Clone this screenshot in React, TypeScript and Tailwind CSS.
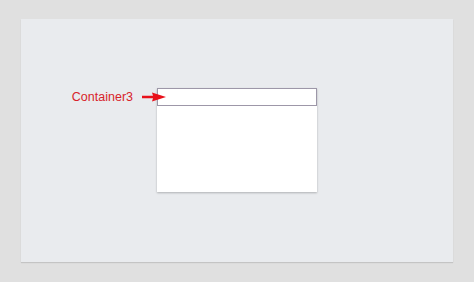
export default function App() {
  return (
    <div className="w-[474px] h-[282px] bg-[#e0e0e0] pt-[19px] pl-[21px]" style={{ fontFamily: '"Liberation Sans", Arial, sans-serif' }}>
      <div className="w-[432px] h-[243px] bg-[#e9ebee] shadow-[0_1px_1px_rgba(0,0,0,0.12)] pt-[69px] pl-[136px]">
        <div className="relative w-[160px] h-[104px] bg-white shadow-[0_1px_2px_rgba(0,0,0,0.25)]">
          <div className="h-[18px] border border-[#9d97a8]" />
          <div className="absolute right-full top-0 h-[18px] mr-[-10px] flex items-center gap-[8px]">
            <span className="text-[12.5px] text-[#d8232a] leading-none whitespace-nowrap">Container3</span>
            <svg width="26" height="10" viewBox="0 0 26 10">
              <path d="M1 3.8 L12 3.8 L11 0.5 L25 5 L11 9.5 L12 6.2 L1 6.2 Z" fill="#e8101a" />
            </svg>
          </div>
        </div>
      </div>
    </div>
  );
}
